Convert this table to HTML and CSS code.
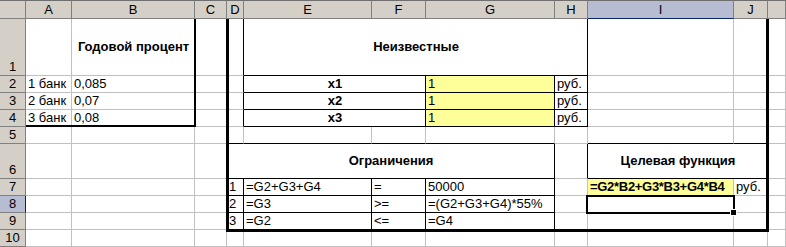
FILE: index.html
```html
<!DOCTYPE html>
<html lang="ru">
<head>
<meta charset="utf-8">
<title>Банки — вклады</title>
<link rel="stylesheet" href="styles.css">
</head>
<body>
<div class="book">
  <div class="sheet">
    <!-- column headings -->
    <div class="c h"></div>
    <div class="c h">A</div>
    <div class="c h">B</div>
    <div class="c h">C</div>
    <div class="c h">D</div>
    <div class="c h">E</div>
    <div class="c h">F</div>
    <div class="c h">G</div>
    <div class="c h">H</div>
    <div class="c h sel">I</div>
    <div class="c h">J</div>
    <div class="c h"></div>

    <!-- row 1 -->
    <div class="c r">1</div>
    <div class="c"></div>
    <div class="c mid ctr b">Годовой процент</div>
    <div class="c"></div>
    <div class="c kr"></div>
    <div class="c span4 mid ctr b kr kb">Неизвестные</div>
    <div class="c"></div>
    <div class="c"></div>
    <div class="c"></div>

    <!-- row 2 -->
    <div class="c r">2</div>
    <div class="c">1 банк</div>
    <div class="c">0,085</div>
    <div class="c"></div>
    <div class="c kr"></div>
    <div class="c span2 ctr b kr kb">x1</div>
    <div class="c y kr kb">1</div>
    <div class="c kr kb">руб.</div>
    <div class="c"></div>
    <div class="c"></div>
    <div class="c"></div>

    <!-- row 3 -->
    <div class="c r">3</div>
    <div class="c">2 банк</div>
    <div class="c">0,07</div>
    <div class="c"></div>
    <div class="c kr"></div>
    <div class="c span2 ctr b kr kb">x2</div>
    <div class="c y kr kb">1</div>
    <div class="c kr kb">руб.</div>
    <div class="c"></div>
    <div class="c"></div>
    <div class="c"></div>

    <!-- row 4 -->
    <div class="c r">4</div>
    <div class="c">3 банк</div>
    <div class="c">0,08</div>
    <div class="c"></div>
    <div class="c kr"></div>
    <div class="c span2 ctr b kr kb">x3</div>
    <div class="c y kr kb">1</div>
    <div class="c kr kb">руб.</div>
    <div class="c"></div>
    <div class="c"></div>
    <div class="c"></div>

    <!-- row 5 -->
    <div class="c r">5</div>
    <div class="c"></div>
    <div class="c"></div>
    <div class="c"></div>
    <div class="c kb"></div>
    <div class="c kb"></div>
    <div class="c kb"></div>
    <div class="c kb"></div>
    <div class="c"></div>
    <div class="c kb"></div>
    <div class="c kb"></div>
    <div class="c"></div>

    <!-- row 6 -->
    <div class="c r">6</div>
    <div class="c"></div>
    <div class="c"></div>
    <div class="c"></div>
    <div class="c span4 mid ctr b kr kb">Ограничения</div>
    <div class="c kr"></div>
    <div class="c span2 mid ctr b kb">Целевая функция</div>
    <div class="c"></div>

    <!-- row 7 -->
    <div class="c r">7</div>
    <div class="c"></div>
    <div class="c"></div>
    <div class="c"></div>
    <div class="c kr kb">1</div>
    <div class="c kr kb">=G2+G3+G4</div>
    <div class="c kr kb">=</div>
    <div class="c kr kb">50000</div>
    <div class="c"></div>
    <div class="c y b tight">=G2*B2+G3*B3+G4*B4</div>
    <div class="c">руб.</div>
    <div class="c"></div>

    <!-- row 8 -->
    <div class="c r sel">8</div>
    <div class="c"></div>
    <div class="c"></div>
    <div class="c"></div>
    <div class="c kr kb">2</div>
    <div class="c kr kb">=G3</div>
    <div class="c kr kb">&gt;=</div>
    <div class="c kr kb">=(G2+G3+G4)*55%</div>
    <div class="c"></div>
    <div class="c"></div>
    <div class="c"></div>
    <div class="c"></div>

    <!-- row 9 -->
    <div class="c r">9</div>
    <div class="c"></div>
    <div class="c"></div>
    <div class="c"></div>
    <div class="c kr kb">3</div>
    <div class="c kr kb">=G2</div>
    <div class="c kr kb">&lt;=</div>
    <div class="c kr kb">=G4</div>
    <div class="c"></div>
    <div class="c"></div>
    <div class="c"></div>
    <div class="c"></div>

    <!-- row 10 -->
    <div class="c r">10</div>
    <div class="c"></div>
    <div class="c"></div>
    <div class="c"></div>
    <div class="c"></div>
    <div class="c"></div>
    <div class="c"></div>
    <div class="c"></div>
    <div class="c"></div>
    <div class="c"></div>
    <div class="c"></div>
    <div class="c"></div>
  </div>

  <!-- heavy borders and the active-cell frame, laid on the same grid -->
  <div class="marks">
    <div class="frame-rates"></div>
    <div class="frame-model"></div>
    <div class="active"><span class="handle"></span></div>
  </div>
</div>
</body>
</html>
```

FILE: styles.css
```css
* {
  box-sizing: border-box;
}

body {
  margin: 0;
  background: #fff;
  font-family: "Liberation Sans", Arial, sans-serif;
  font-size: 13px;
  color: #000;
}

.book {
  position: relative;
  width: 786px;
  height: 247px;
  overflow: hidden;
}

.sheet,
.marks {
  display: grid;
  grid-template-columns: 26px 46px 123px 32px 17px 128px 54px 129px 33px 146px 34px 1fr;
  grid-template-rows: 19px 57px 17px 17px 17px 17px 35px 17px 17px 17px 17px;
}

/* cells */
.c {
  display: flex;
  align-items: flex-end;
  padding: 0 1px 1px 2px;
  line-height: 15px;
  white-space: nowrap;
  min-width: 0;
  border-right: 1px solid #c0c0c0;
  border-bottom: 1px solid #c0c0c0;
}

.span2 { grid-column: span 2; }
.span4 { grid-column: span 4; }

.mid { align-items: center; }
.ctr { justify-content: center; }
.b { font-weight: bold; }
.y { background: #ffff99; }
.tight { letter-spacing: -0.3px; }

/* thin black cell borders */
.kr { border-right-color: #000; }
.kb { border-bottom-color: #000; }

/* column and row headings */
.h {
  background: #d4d0c8;
  border-top: 1px solid #6f6f6f;
  border-right-color: #808080;
  border-bottom-color: #808080;
  justify-content: center;
  align-items: center;
  padding: 0;
}

.r {
  background: #d4d0c8;
  border-right-color: #808080;
  border-bottom-color: #808080;
  justify-content: center;
  padding: 0 0 1px 0;
}

.h.sel {
  background: #b6bdd2;
  border-bottom-color: #0a246a;
}

.r.sel {
  background: #b6bdd2;
  border-right-color: #0a246a;
}

/* overlay layer */
.marks {
  position: absolute;
  inset: 0;
  pointer-events: none;
}

.frame-rates {
  grid-column: 2 / 4;
  grid-row: 2 / 6;
  border-right: 2px solid #000;
  border-bottom: 2px solid #000;
  margin-right: -1px;
  margin-bottom: 0;
}

.frame-model {
  grid-column: 5 / 12;
  grid-row: 2 / 11;
  border-left: 3px solid #000;
  border-right: 3px solid #000;
  border-bottom: 3px solid #000;
  margin-left: -1px;
  margin-right: -1px;
  margin-bottom: -2px;
}

.active {
  position: relative;
  grid-column: 10;
  grid-row: 9;
  border: 2px solid #000;
  margin: -1px -1px -1px -2px;
}

.handle {
  position: absolute;
  right: -4px;
  bottom: -4px;
  width: 7px;
  height: 7px;
  background: #000;
  border: 1px solid #fff;
}
```
